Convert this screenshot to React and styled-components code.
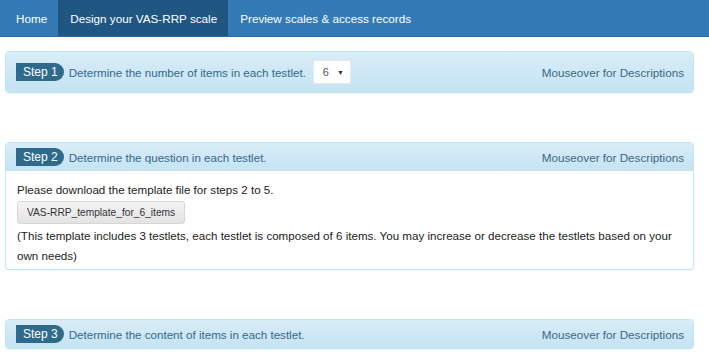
import React from 'react';
import styled, { createGlobalStyle } from 'styled-components';

const GlobalStyle = createGlobalStyle`
	body {
		margin: 0;
		background: #fff;
		font-family: "Liberation Sans", Arial, sans-serif;
		font-size: 11.6px;
		color: #333;
	}
`

const NavBar = styled.nav`
	display: flex;
	height: 37px;
	background-color: #337ab7;
	border-bottom: 1px solid #2e6da4;
	box-sizing: border-box;
`

const NavItem = styled.a`
	display: flex;
	align-items: center;
	padding: 0 ${p => p.first ? '11px 0 16px' : '11px 0 12px'};
	color: #fff;
	font-size: 11.7px;
	text-decoration: none;
	background-color: ${p => p.active ? '#1f5682' : 'transparent'};
`

const Content = styled.div`
	padding: 14px 15px 0 5px;
`

const Panel = styled.section`
	border: 1px solid #bce8f1;
	border-radius: 4px;
	margin-bottom: 49px;
	background: #fff;
	box-shadow: 0 1px 1px rgba(0, 0, 0, 0.05);
	overflow: hidden;
`

const Heading = styled.div`
	display: flex;
	align-items: center;
	justify-content: space-between;
	padding: ${p => p.tall ? '8px 9px 8px 10px' : '5px 9px 5px 10px'};
	background: linear-gradient(to bottom, #d9edf7 0%, #c4e3f3 100%);
	color: #34698a;
`

const Left = styled.div`
	display: flex;
	align-items: center;
`

const Badge = styled.span`
	display: inline-block;
	height: 18px;
	line-height: 18px;
	padding: 0 6px 0 7px;
	margin-right: 5px;
	background-color: #2d6a8c;
	color: #fff;
	font-size: 12px;
	border-radius: 0 10px 10px 0;
`

const Title = styled.span`
	font-size: 11.6px;
`

const Hint = styled.span`
	font-size: 11.7px;
	color: #3b6984;
`

const Select = styled.div`
	display: flex;
	align-items: center;
	justify-content: space-between;
	box-sizing: border-box;
	width: 38px;
	height: 24px;
	margin-left: 7px;
	padding: 0 6px 0 9px;
	background: #fff;
	border: 1px solid #e3e8ec;
	border-radius: 2px;
	color: #555;
	font-size: 11px;
`

const Caret = styled.span`
	font-size: 7px;
	color: #333;
`

const Body = styled.div`
	padding: 9px 11px 3px;
	line-height: 20px;
	color: #222;
`

const Button = styled.button`
	display: block;
	margin: 1px 0 2px;
	height: 23px;
	padding: 0 9px;
	font-family: inherit;
	font-size: 10.2px;
	color: #333;
	background: linear-gradient(to bottom, #f4f4f4 0%, #e3e3e3 100%);
	border: 1px solid #d6d6d6;
	border-radius: 3px;
`

const steps = [
	{ n: 1, text: 'Determine the number of items in each testlet.', select: true },
	{ n: 2, text: 'Determine the question in each testlet.', body: true },
	{ n: 3, text: 'Determine the content of items in each testlet.' },
]

const App = () => {
	return (
		<>
			<GlobalStyle />
			<NavBar>
				<NavItem first>Home</NavItem>
				<NavItem active>Design your VAS-RRP scale</NavItem>
				<NavItem>Preview scales &amp; access records</NavItem>
			</NavBar>
			<Content>
				{steps.map(s => (
					<Panel key={s.n}>
						<Heading tall={s.select}>
							<Left>
								<Badge>Step {s.n}</Badge>
								<Title>{s.text}</Title>
								{s.select && (
									<Select>
										6 <Caret>▼</Caret>
									</Select>
								)}
							</Left>
							<Hint>Mouseover for Descriptions</Hint>
						</Heading>
						{s.body && (
							<Body>
								Please download the template file for steps 2 to 5.
								<Button>VAS-RRP_template_for_6_items</Button>
								(This template includes 3 testlets, each testlet is composed of 6 items. You may increase or decrease the testlets based on your own needs)
							</Body>
						)}
					</Panel>
				))}
			</Content>
		</>
	)
}

export default App;
